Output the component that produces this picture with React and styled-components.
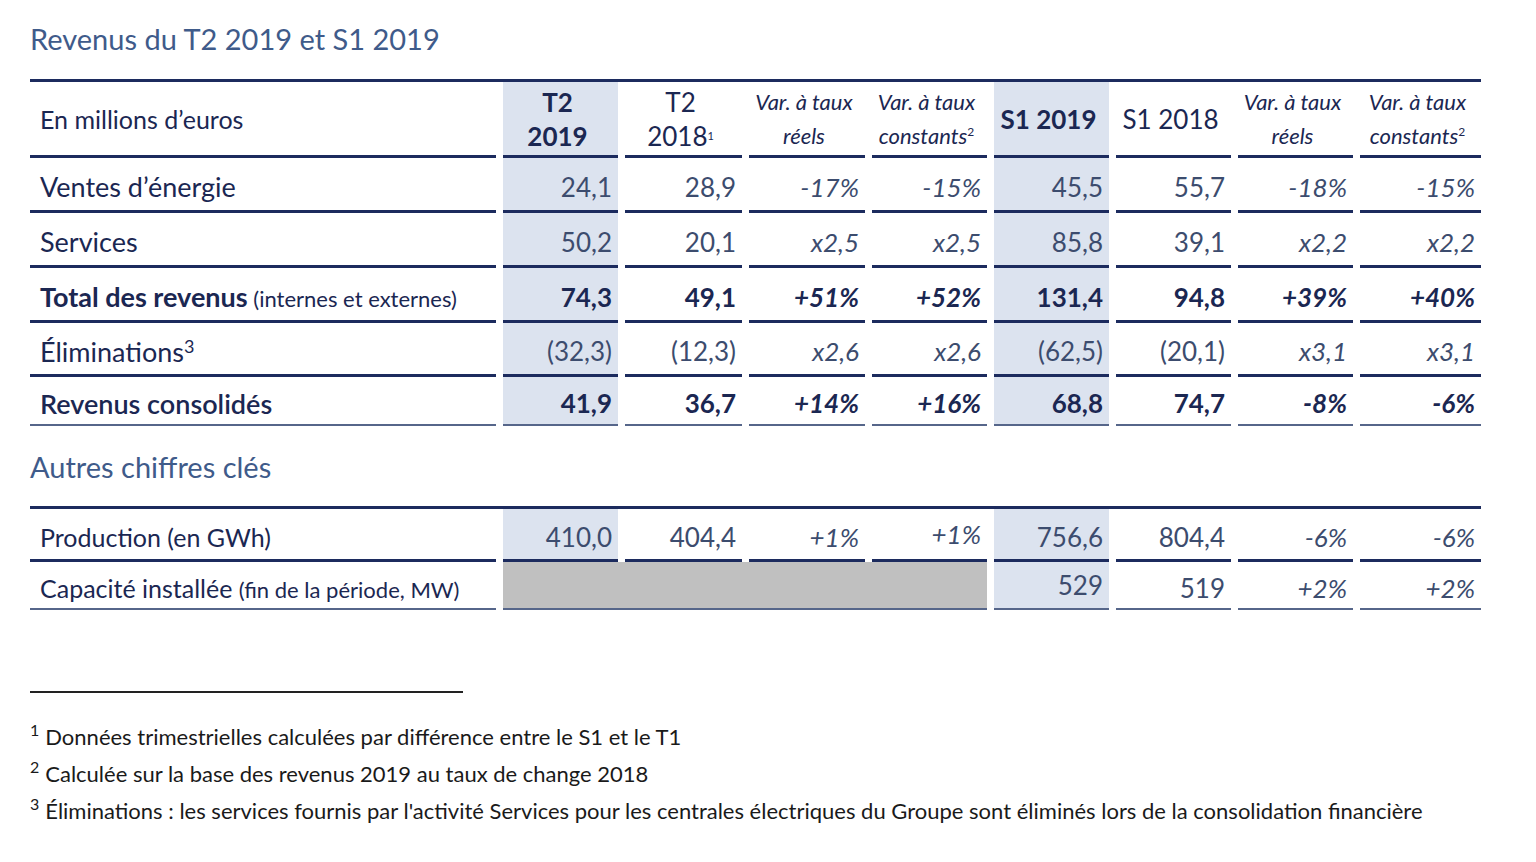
import React from 'react'
import styled, { createGlobalStyle } from 'styled-components'

const GlobalStyle = createGlobalStyle`
  body {
    margin: 0;
    background: #ffffff;
    font-family: Lato, "Open Sans", "Liberation Sans", sans-serif;
    color: #1b2752;
  }
`

const Page = styled.div`
  padding: 21px 0 40px 30px;
  width: 1451px;
`

const Title = styled.h2`
  margin: 0;
  font-size: 29px;
  line-height: 36px;
  font-weight: 400;
  color: #3f5b8a;
`

const Table = styled.div`
  display: grid;
  grid-template-columns: 466px 115px 117px 116px 115px 115px 115px 115px 121px;
  column-gap: 7px;
  border-top: 3px solid #1c2b5e;
  margin-top: ${p => p.$mt}px;
`

const Cell = styled.div`
  display: flex;
  align-items: center;
  justify-content: ${p => (p.$label ? 'flex-start' : p.$center ? 'center' : 'flex-end')};
  text-align: ${p => (p.$center ? 'center' : 'left')};
  height: ${p => p.$h}px;
  box-sizing: border-box;
  padding: ${p => (p.$label ? `${p.$pt ?? 5}px 0 0 10px` : `${p.$pt ?? 5}px 6px 0 0`)};
  background: ${p => (p.$grey ? '#c0c0c0' : p.$shade ? '#dce3ef' : 'transparent')};
  border-bottom: ${p => (p.$last ? '2px solid #56668a' : '3px solid #1c2b5e')};
  font-size: ${p => p.$size || 26}px;
  font-weight: ${p => (p.$bold ? 700 : 400)};
  font-style: ${p => (p.$italic ? 'italic' : 'normal')};
  color: ${p => (p.$muted ? '#3c4c6e' : '#1b2752')};
  white-space: nowrap;
  ${p => p.$span && `grid-column: span ${p.$span};`}
`

const HeadText = styled.div`
  line-height: 34px;
  font-size: ${p => p.$size || 26}px;
  font-weight: ${p => (p.$bold ? 700 : 400)};
  font-style: ${p => (p.$italic ? 'italic' : 'normal')};
`

const Small = styled.span`
  font-size: ${p => p.$size || 22}px;
  font-weight: 400;
`

const Sup = styled.sup`
  font-size: ${p => p.$size || 12}px;
  vertical-align: ${p => p.$up || 8}px;
  line-height: 0;
  font-style: normal;
`

const Raised = styled.span`
  position: relative;
  top: -3px;
`

const Rule = styled.div`
  width: 433px;
  height: 1.5px;
  background: #222;
  margin-top: 81px;
`

const Notes = styled.div`
  margin-top: 25px;
  font-size: 22px;
  line-height: 37px;
  color: #1a1a1a;
`

const NoteLine = styled.div`
  white-space: nowrap;
`

const NoteNum = styled.sup`
  font-size: 16px;
  vertical-align: 9px;
  line-height: 0;
  margin-right: 6px;
`

const rows = [
  { label: 'Ventes d’énergie', h: 55, values: ['24,1', '28,9', '-17%', '-15%', '45,5', '55,7', '-18%', '-15%'] },
  { label: 'Services', h: 55, values: ['50,2', '20,1', 'x2,5', 'x2,5', '85,8', '39,1', 'x2,2', 'x2,2'] },
  { label: 'Total des revenus', extra: '(internes et externes)', bold: true, h: 55, values: ['74,3', '49,1', '+51%', '+52%', '131,4', '94,8', '+39%', '+40%'] },
  { label: 'Éliminations', sup: '3', h: 54, values: ['(32,3)', '(12,3)', 'x2,6', 'x2,6', '(62,5)', '(20,1)', 'x3,1', 'x3,1'] },
  { label: 'Revenus consolidés', bold: true, semi: true, last: true, h: 49, values: ['41,9', '36,7', '+14%', '+16%', '68,8', '74,7', '-8%', '-6%'] },
]

const shaded = i => i === 0 || i === 4
const italicCol = i => i === 2 || i === 3 || i === 6 || i === 7

function VarHead({ sub, sup }) {
  return (
    <Cell $center $h={76} $pt={0}>
      <div>
        <HeadText $italic $size={22}>Var. à taux</HeadText>
        <HeadText $italic $size={22}>{sub}{sup && <Sup $size={12} $up={8}>{sup}</Sup>}</HeadText>
      </div>
    </Cell>
  )
}

function HeaderRow() {
  return (
    <>
      <Cell $label $h={76} $size={25} $pt={0}>En millions d’euros</Cell>
      <Cell $center $shade $h={76} $pt={0}>
        <div>
          <HeadText $bold>T2</HeadText>
          <HeadText $bold>2019</HeadText>
        </div>
      </Cell>
      <Cell $center $h={76} $pt={0}>
        <div>
          <HeadText>T2</HeadText>
          <HeadText>2018<Sup $size={11} $up={6}>1</Sup></HeadText>
        </div>
      </Cell>
      <VarHead sub="réels" />
      <VarHead sub="constants" sup="2" />
      <Cell $center $shade $h={76} $pt={0}>
        <HeadText $bold>S1 2019</HeadText>
      </Cell>
      <Cell $center $h={76} $pt={0}>
        <HeadText>S1 2018</HeadText>
      </Cell>
      <VarHead sub="réels" />
      <VarHead sub="constants" sup="2" />
    </>
  )
}

export default function App() {
  return (
    <Page>
      <GlobalStyle />
      <Title>Revenus du T2 2019 et S1 2019</Title>
      <Table $mt={22}>
        <HeaderRow />
        {rows.map(r => (
          <React.Fragment key={r.label}>
            <Cell $label $h={r.h} $size={27} $last={r.last} $bold={r.bold && !r.semi} style={r.semi ? { fontWeight: 600 } : undefined}>
              <span>
                {r.label}
                {r.extra && <Small> {r.extra}</Small>}
                {r.sup && <Sup $size={18} $up={9}>{r.sup}</Sup>}
              </span>
            </Cell>
            {r.values.map((v, i) => (
              <Cell
                key={i}
                $h={r.h}
                $last={r.last}
                $shade={shaded(i)}
                $italic={italicCol(i)}
                $bold={r.bold}
                $muted={!r.bold}
              >
                {v}
              </Cell>
            ))}
          </React.Fragment>
        ))}
      </Table>

      <Title style={{ marginTop: 23 }}>Autres chiffres clés</Title>
      <Table $mt={21}>
        <Cell $label $h={53} $size={25}>Production (en GWh)</Cell>
        <Cell $h={53} $shade $muted>410,0</Cell>
        <Cell $h={53} $muted>404,4</Cell>
        <Cell $h={53} $muted $italic>+1%</Cell>
        <Cell $h={53} $muted $italic><Raised>+1%</Raised></Cell>
        <Cell $h={53} $shade $muted>756,6</Cell>
        <Cell $h={53} $muted>804,4</Cell>
        <Cell $h={53} $muted $italic>-6%</Cell>
        <Cell $h={53} $muted $italic>-6%</Cell>

        <Cell $label $h={48} $last $size={25}>
          <span>Capacité installée <Small>(fin de la période, MW)</Small></span>
        </Cell>
        <Cell $h={48} $last $grey $span={4} />
        <Cell $h={48} $last $shade $muted><Raised>529</Raised></Cell>
        <Cell $h={48} $last $muted>519</Cell>
        <Cell $h={48} $last $muted $italic>+2%</Cell>
        <Cell $h={48} $last $muted $italic>+2%</Cell>
      </Table>

      <Rule />
      <Notes>
        <NoteLine><NoteNum>1</NoteNum>Données trimestrielles calculées par différence entre le S1 et le T1</NoteLine>
        <NoteLine><NoteNum>2</NoteNum>Calculée sur la base des revenus 2019 au taux de change 2018</NoteLine>
        <NoteLine><NoteNum>3</NoteNum>Éliminations : les services fournis par l'activité Services pour les centrales électriques du Groupe sont éliminés lors de la consolidation financière</NoteLine>
      </Notes>
    </Page>
  )
}
